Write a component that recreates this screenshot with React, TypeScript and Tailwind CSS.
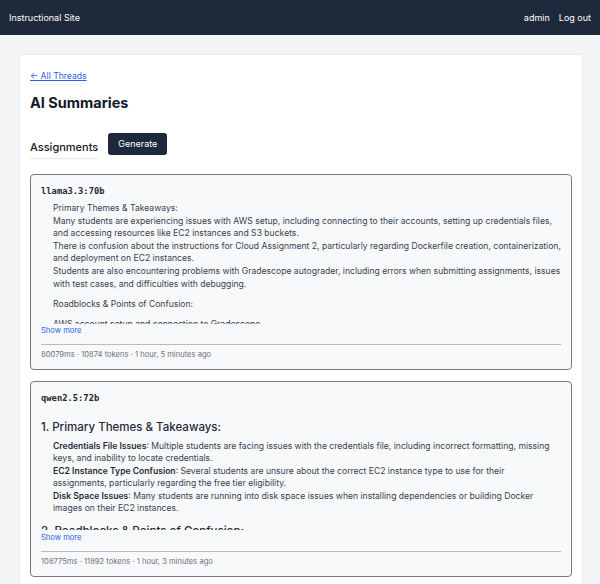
import React from "react";

const sans = { fontFamily: "Inter, 'Noto Sans', sans-serif" };

function Card({
  model,
  children,
  footer,
}: {
  model: string;
  children: React.ReactNode;
  footer: string;
}) {
  return (
    <div className="rounded-[4px] border border-[#77797d] bg-[#f8f9fb] px-[10px] pt-[9px] pb-[8px]">
      <div
        className="text-[8.8px] font-bold leading-[14px] text-[#1f2937]"
        style={{ fontFamily: "'DejaVu Sans Mono', monospace" }}
      >
        {model}
      </div>
      <div className="mt-[4px] h-[121.5px] overflow-hidden">{children}</div>
      <div className="mt-[1.5px] text-[7.6px] leading-[12px] text-[#2563eb]">Show more</div>
      <div className="mt-[7px] border-t border-[#b9bbbf]" />
      <div className="mt-[4px] text-[7.6px] leading-[12px] text-[#6b7280]">{footer}</div>
    </div>
  );
}

export default function App() {
  return (
    <div className="min-h-[584px] bg-[#f3f4f6] text-[9px] leading-[12px]" style={sans}>
      <nav className="flex h-[35px] items-center justify-between bg-[#1e293b] px-[9px] text-[9px] text-white">
        <span>Instructional Site</span>
        <div className="flex gap-[9px]">
          <span>admin</span>
          <span>Log out</span>
        </div>
      </nav>
      <div className="ml-5 mr-[18px] mt-5 bg-white px-[10px] pt-[15px] pb-[10px] shadow-[0_0_2px_rgba(0,0,0,0.08)]">
        <a className="block text-[8.6px] leading-[12px] text-[#2563eb] underline">← All Threads</a>
        <h1 className="mt-[12px] text-[14.5px] font-bold leading-[18px] text-[#111827]">AI Summaries</h1>
        <div className="mt-[21px] flex items-start gap-[10px]">
          <div className="border-b border-[#e5e7eb] pt-[7px] pb-[4px] text-[11px] font-medium leading-[14px] text-[#111827]">
            Assignments
          </div>
          <button className="h-[22px] rounded-[3px] bg-[#1e293b] px-[10px] text-[9px] text-white">
            Generate
          </button>
        </div>
        <div className="mt-[15px] flex flex-col gap-[10.5px]">
          <Card model="llama3.3:70b" footer="80079ms · 10874 tokens · 1 hour, 5 minutes ago">
            <div className="pl-[12px] text-[8.6px] leading-[12.6px] text-[#374151]">
              <p>Primary Themes &amp; Takeaways:</p>
              <p>
                Many students are experiencing issues with AWS setup, including connecting to their accounts, setting up credentials files, and accessing resources like EC2 instances and S3 buckets.
              </p>
              <p>
                There is confusion about the instructions for Cloud Assignment 2, particularly regarding Dockerfile creation, containerization, and deployment on EC2 instances.
              </p>
              <p>
                Students are also encountering problems with Gradescope autograder, including errors when submitting assignments, issues with test cases, and difficulties with debugging.
              </p>
              <p className="mt-[7.5px]">Roadblocks &amp; Points of Confusion:</p>
              <p className="mt-[7.5px]">AWS account setup and connection to Gradescope</p>
            </div>
          </Card>
          <Card model="qwen2.5:72b" footer="108775ms · 11892 tokens · 1 hour, 3 minutes ago">
            <div className="text-[8.6px] leading-[12.6px] text-[#374151]">
              <p className="mt-[11px] text-[11.5px] font-medium leading-[14px] text-[#1f2937]">
                1. Primary Themes &amp; Takeaways:
              </p>
              <div className="mt-[6px] pl-[12px] pr-[4px]">
                <p>
                  <b className="font-semibold text-[#1f2937]">Credentials File Issues</b>: Multiple students are facing issues with the credentials file, including incorrect formatting, missing keys, and inability to locate credentials.
                </p>
                <p>
                  <b className="font-semibold text-[#1f2937]">EC2 Instance Type Confusion</b>: Several students are unsure about the correct EC2 instance type to use for their assignments, particularly regarding the free tier eligibility.
                </p>
                <p>
                  <b className="font-semibold text-[#1f2937]">Disk Space Issues</b>: Many students are running into disk space issues when installing dependencies or building Docker images on their EC2 instances.
                </p>
              </div>
              <p className="mt-[9px] text-[11.5px] font-medium leading-[14px] text-[#1f2937]">
                2. Roadblocks &amp; Points of Confusion:
              </p>
            </div>
          </Card>
        </div>
      </div>
    </div>
  );
}
